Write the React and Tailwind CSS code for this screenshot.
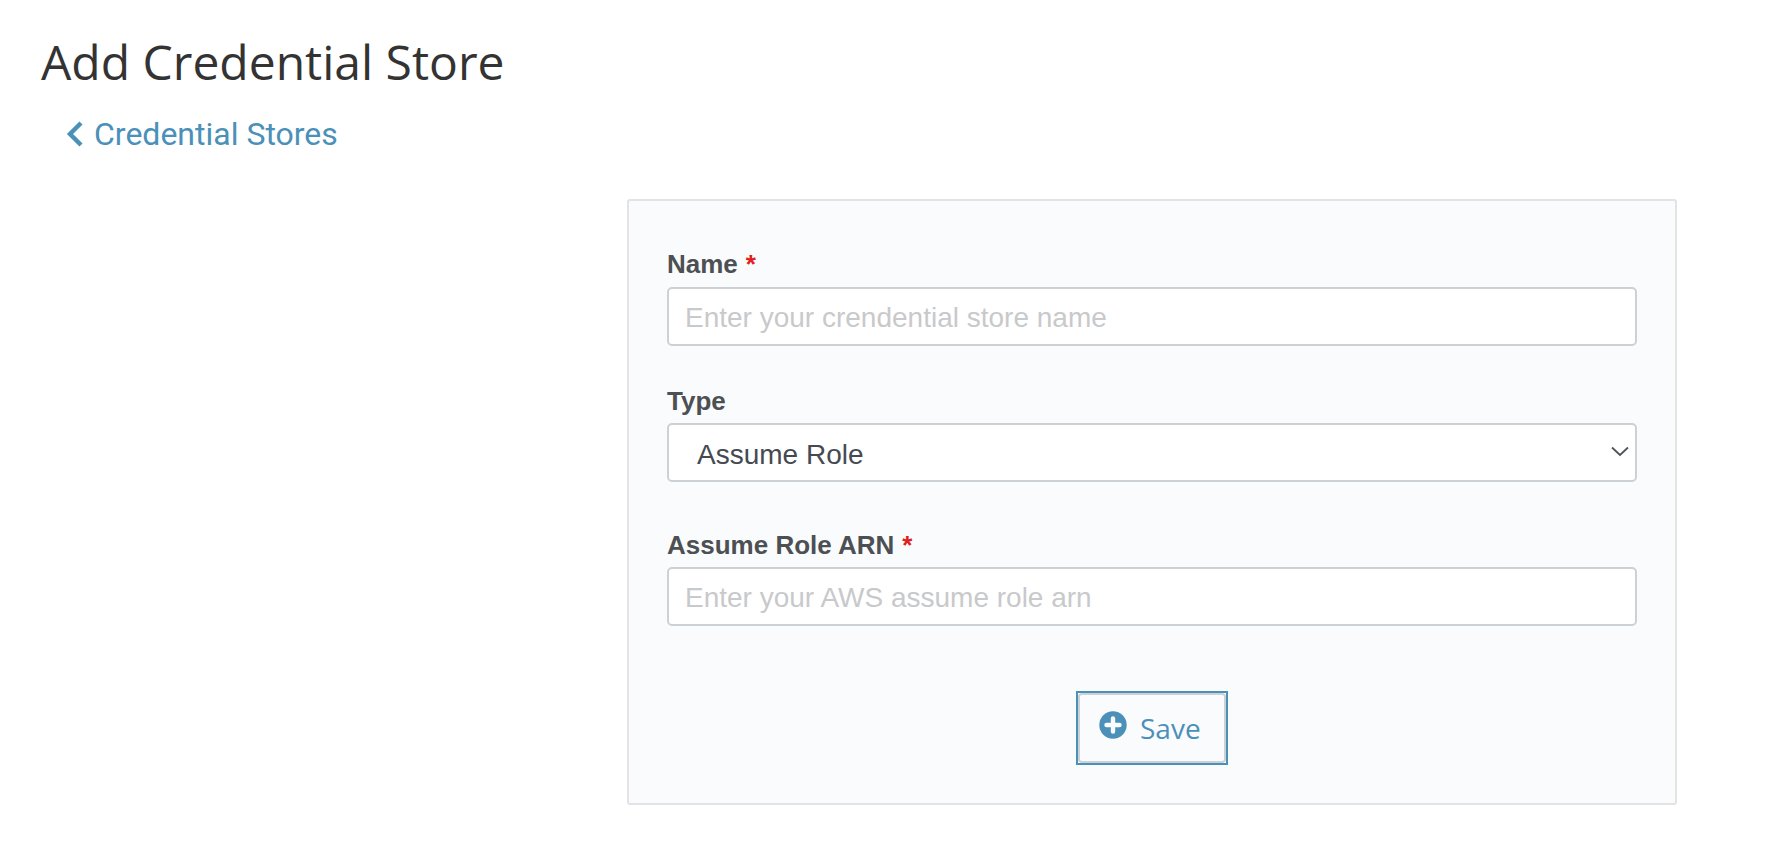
// App.jsx
function PlusCircle() {
  return (
    <svg width="28" height="28" viewBox="0 0 28 28" className="shrink-0">
      <circle cx="14" cy="14" r="13.7" fill="#4a90b8" />
      <path d="M14 7.5v13M7.5 14h13" stroke="#fafbfd" strokeWidth="4.4" strokeLinecap="round" />
    </svg>
  );
}

function Label({ children, required }) {
  return (
    <label className="block font-['Liberation_Sans',sans-serif] font-bold text-[26px] leading-[28px] text-[#4d5053] mb-[8px]">
      {children}
      {required && <span className="text-[#e0201b] ml-[8px]">*</span>}
    </label>
  );
}

function TextInput({ placeholder }) {
  return (
    <input
      placeholder={placeholder}
      className="block w-full h-[59px] px-[16px] pt-[2px] bg-white border-2 border-[#ccd1d6] rounded-[5px] font-['Liberation_Sans',sans-serif] text-[28px] placeholder:text-[#c8c9cb] outline-none"
    />
  );
}

export default function App() {
  return (
    <div className="min-h-[862px] bg-white">
      <h1 className="pt-[32px] pl-[41px] font-['Open_Sans',sans-serif] text-[48px] leading-[60px] text-[#333333]">
        Add Credential Store
      </h1>

      <a className="mt-[22px] ml-[66px] flex items-center gap-[10px] font-['Roboto',sans-serif] text-[32px] leading-[40px] text-[#4a90b8]">
        <svg width="18" height="28" viewBox="0 0 18 28" fill="none" className="shrink-0">
          <path d="M15 3 4 14l11 11" stroke="#4a90b8" strokeWidth="4.4" />
        </svg>
        Credential Stores
      </a>

      <div className="mt-[45px] ml-[627px] w-[1050px] h-[606px] bg-[#fafbfd] border-2 border-[#e2e3e5] rounded-[3px] pt-[49px] px-[38px]">
        <Label required>Name</Label>
        <div className="pt-px">
          <TextInput placeholder="Enter your crendential store name" />
        </div>

        <div className="mt-[41px]">
          <Label>Type</Label>
          <div className="relative">
            <select className="block w-full h-[59px] pl-[28px] pr-[40px] pt-[4px] appearance-none bg-white border-2 border-[#ccd1d6] rounded-[5px] font-['Liberation_Sans',sans-serif] text-[28px] text-[#454a52] outline-none">
              <option>Assume Role</option>
            </select>
            <svg width="18" height="11" viewBox="0 0 18 11" fill="none" className="absolute right-[8px] top-[23px]">
              <path d="M1 1.5 9 9l8-7.5" stroke="#4e5359" strokeWidth="1.8" />
            </svg>
          </div>
        </div>

        <div className="mt-[49px]">
          <Label required>Assume Role ARN</Label>
          <TextInput placeholder="Enter your AWS assume role arn" />
        </div>

        <div className="mt-[65px] flex justify-center">
          <button className="w-[152px] h-[74px] border-2 border-[#4a90b8] p-0">
            <span className="flex items-center w-full h-full pl-[19px] gap-[13px] border-2 border-[#ccd1d6] rounded-[4px] font-['Open_Sans',sans-serif] text-[28px] text-[#4a90b8]">
              <span className="-mt-[6px]">
                <PlusCircle />
              </span>
              Save
            </span>
          </button>
        </div>
      </div>
    </div>
  );
}
